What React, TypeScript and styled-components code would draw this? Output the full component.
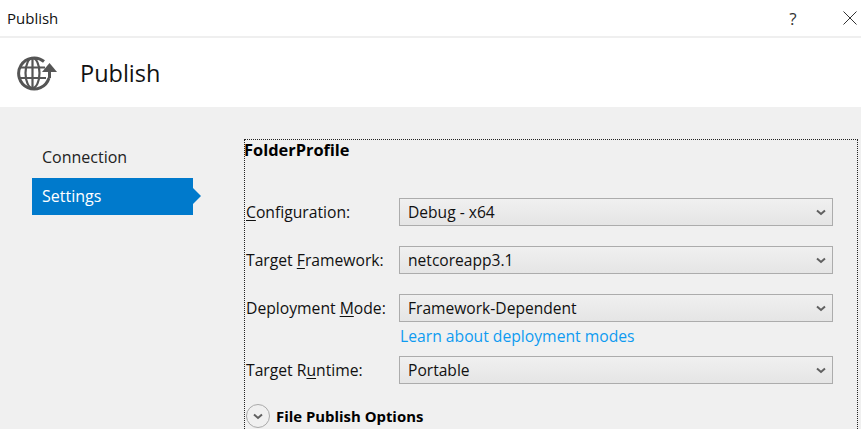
import styled, { createGlobalStyle } from "styled-components";

const GlobalStyle = createGlobalStyle`
  html, body {
    margin: 0;
    padding: 0;
    height: 100%;
    overflow: hidden;
    background: #f0f0f0;
    font-family: "Open Sans", "Noto Sans", "Liberation Sans", sans-serif;
  }
`;

const Window = styled.div`
  width: 861px;
  height: 429px;
  display: flex;
  flex-direction: column;
  overflow: hidden;
`;

const TitleBar = styled.div`
  height: 36px;
  flex: none;
  display: flex;
  align-items: center;
  justify-content: space-between;
  padding-left: 7px;
  background: #fff;
  border-bottom: 2px solid #efefef;
  font-size: 15px;
  color: #111;
`;

const WindowButtons = styled.div`
  display: flex;
  align-items: center;
  gap: 41px;
  padding-right: 3px;
`;

const WindowButton = styled.div`
  width: 16px;
  height: 36px;
  display: flex;
  align-items: center;
  justify-content: center;
  font-size: 17px;
  color: #333;
`;

const Header = styled.div`
  height: 69px;
  flex: none;
  display: flex;
  align-items: center;
  padding-left: 16px;
  gap: 22px;
  background: #fff;
`;

const HeaderTitle = styled.h1`
  margin: 0;
  font-size: 23.5px;
  font-weight: 400;
  color: #111;
`;

const Body = styled.div`
  flex: 1;
  display: flex;
  min-height: 0;
  padding: 32px 3px 0 32px;
`;

const Nav = styled.nav`
  width: 169px;
  flex: none;
  margin-right: 43px;
`;

const NavItem = styled.div<{ $active?: boolean }>`
  position: relative;
  width: 161px;
  height: 37px;
  display: flex;
  align-items: center;
  padding: 0 0 2px 10px;
  box-sizing: border-box;
  margin-bottom: 2px;
  font-size: 16px;
  color: ${(p) => (p.$active ? "#fff" : "#222")};
  background: ${(p) => (p.$active ? "#007acc" : "transparent")};

  ${(p) =>
    p.$active &&
    `
    &::after {
      content: "";
      position: absolute;
      left: 100%;
      top: 10px;
      border-left: 8px solid #007acc;
      border-top: 8px solid transparent;
      border-bottom: 8px solid transparent;
    }
  `}
`;

const Panel = styled.section`
  flex: 1;
  border: 1px dotted #222;
  border-bottom: none;
  box-sizing: border-box;
  display: flex;
  flex-direction: column;
`;

const ProfileName = styled.div`
  height: 20px;
  line-height: 20px;
  margin-left: -1px;
  font-size: 16.4px;
  font-weight: 700;
  color: #000;
  margin-bottom: 38px;
`;

const Row = styled.div<{ $gap?: number }>`
  display: flex;
  align-items: center;
  height: 28px;
  margin-bottom: ${(p) => p.$gap ?? 20}px;
`;

const Label = styled.label`
  width: 154px;
  flex: none;
  padding-left: 1px;
  box-sizing: border-box;
  font-size: 15.7px;
  color: #111;
  white-space: nowrap;

  u {
    text-underline-offset: 2px;
  }
`;

const Select = styled.div`
  width: 434px;
  height: 28px;
  box-sizing: border-box;
  display: flex;
  align-items: center;
  justify-content: space-between;
  padding: 0 6px 0 8px;
  border: 1px solid #acacac;
  background: linear-gradient(#f0f0f0, #e5e5e5);
  font-size: 15.6px;
  color: #111;
`;

const LinkRow = styled.div`
  height: 28px;
  padding-left: 155px;
  margin-top: -20px;
  margin-bottom: 6px;
  display: flex;
  align-items: center;
`;

const LearnLink = styled.a`
  font-size: 15.7px;
  color: #0e9bf0;
`;

const Expander = styled.div`
  display: flex;
  align-items: center;
  gap: 6px;
  margin-top: 1px;
  padding-left: 1px;
  font-size: 14.9px;
  font-weight: 700;
  color: #000;
`;

const ExpanderButton = styled.span`
  width: 24px;
  height: 24px;
  box-sizing: border-box;
  border: 1px solid #aaa;
  border-radius: 50%;
  display: flex;
  align-items: center;
  justify-content: center;
`;

const Chevron = () => (
  <svg width="10" height="7" viewBox="0 0 10 7">
    <path d="M1 1.5 L5 5 L9 1.5" fill="none" stroke="#606060" strokeWidth="2" />
  </svg>
);

const GlobeIcon = () => (
  <svg width="42" height="42" viewBox="0 0 42 42">
    <g fill="none" stroke="#555">
      <path d="M28 9.5A15.5 15.5 0 1 0 33 26" strokeWidth="3" />
      <ellipse cx="16.5" cy="21" rx="7" ry="15" strokeWidth="2.2" />
      <path d="M16.5 6v30M3 15.5h26M3 26h27" strokeWidth="2.2" />
      <path d="M33.5 26V17" strokeWidth="3" />
    </g>
    <path d="M33.5 11 L41 20 L26 20 Z" fill="#555" />
  </svg>
);

const CloseIcon = () => (
  <svg width="14" height="14" viewBox="0 0 14 14">
    <path d="M0.5 0.5 L13.5 13.5 M13.5 0.5 L0.5 13.5" stroke="#333" strokeWidth="1" />
  </svg>
);

const App = () => {
  return (
    <Window>
      <GlobalStyle />
      <TitleBar>
        Publish
        <WindowButtons>
          <WindowButton>?</WindowButton>
          <WindowButton>
            <CloseIcon />
          </WindowButton>
        </WindowButtons>
      </TitleBar>
      <Header>
        <GlobeIcon />
        <HeaderTitle>Publish</HeaderTitle>
      </Header>
      <Body>
        <Nav>
          <NavItem>Connection</NavItem>
          <NavItem $active>Settings</NavItem>
        </Nav>
        <Panel>
          <ProfileName>FolderProfile</ProfileName>
          <Row>
            <Label>
              <u>C</u>onfiguration:
            </Label>
            <Select>
              Debug - x64
              <Chevron />
            </Select>
          </Row>
          <Row>
            <Label>
              Target <u>F</u>ramework:
            </Label>
            <Select>
              netcoreapp3.1
              <Chevron />
            </Select>
          </Row>
          <Row>
            <Label>
              Deployment <u>M</u>ode:
            </Label>
            <Select>
              Framework-Dependent
              <Chevron />
            </Select>
          </Row>
          <LinkRow>
            <LearnLink>Learn about deployment modes</LearnLink>
          </LinkRow>
          <Row $gap={19}>
            <Label>
              Target R<u>u</u>ntime:
            </Label>
            <Select>
              Portable
              <Chevron />
            </Select>
          </Row>
          <Expander>
            <ExpanderButton>
              <Chevron />
            </ExpanderButton>
            File Publish Options
          </Expander>
        </Panel>
      </Body>
    </Window>
  );
};

export default App;
